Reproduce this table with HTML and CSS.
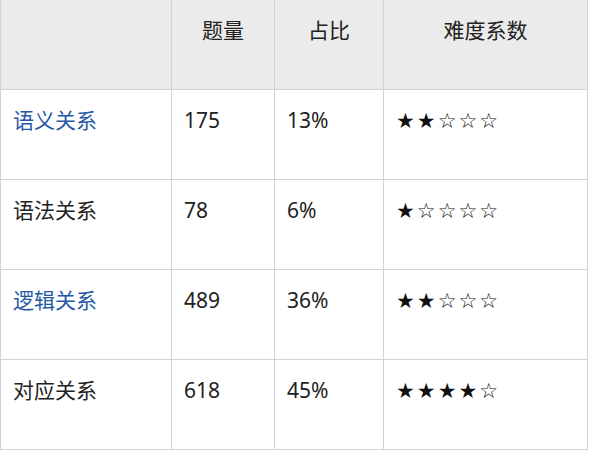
FILE: index.html
```html
<!DOCTYPE html>
<html lang="zh">
<head>
<meta charset="utf-8">
<link rel="stylesheet" href="styles.css">
</head>
<body>
<table class="stats">
  <colgroup>
    <col class="c1"><col class="c2"><col class="c3"><col class="c4">
  </colgroup>
  <thead>
    <tr>
      <th></th>
      <th>题量</th>
      <th>占比</th>
      <th>难度系数</th>
    </tr>
  </thead>
  <tbody>
    <tr>
      <td><a class="link" href="#">语义关系</a></td>
      <td>175</td>
      <td>13%</td>
      <td><span class="stars">★★☆☆☆</span></td>
    </tr>
    <tr>
      <td>语法关系</td>
      <td>78</td>
      <td>6%</td>
      <td><span class="stars">★☆☆☆☆</span></td>
    </tr>
    <tr>
      <td><a class="link" href="#">逻辑关系</a></td>
      <td>489</td>
      <td>36%</td>
      <td><span class="stars">★★☆☆☆</span></td>
    </tr>
    <tr>
      <td>对应关系</td>
      <td>618</td>
      <td>45%</td>
      <td><span class="stars">★★★★☆</span></td>
    </tr>
  </tbody>
</table>
</body>
</html>
```
FILE: styles.css
```css
html, body {
  margin: 0;
  padding: 0;
  background: #fff;
}
body {
  font-family: "Noto Sans", "Noto Sans CJK SC", sans-serif;
  color: #222;
}
.stats {
  border-collapse: collapse;
  table-layout: fixed;
  width: 587px;
}
.c1 { width: 171px; }
.c2 { width: 103px; }
.c3 { width: 109px; }
.c4 { width: 204px; }
.stats th,
.stats td {
  border: 1px solid #d3d3d3;
  height: 89px;
  box-sizing: border-box;
  padding: 15px 12px 0 12px;
  vertical-align: top;
  font-size: 21px;
  line-height: 30px;
  font-family: "Noto Sans", "Noto Sans CJK SC", sans-serif;
}
.stats thead th {
  border-top: none;
  background: #ebebeb;
  font-weight: normal;
  text-align: center;
  height: 89px;
}
.stats td {
  text-align: left;
  height: 90px;
}
.link {
  color: #2559a6;
  text-decoration: none;
}
.stars {
  font-family: "DejaVu Sans", sans-serif;
  font-size: 21px;
  letter-spacing: 2px;
  line-height: 30px;
  color: #111;
}
```
